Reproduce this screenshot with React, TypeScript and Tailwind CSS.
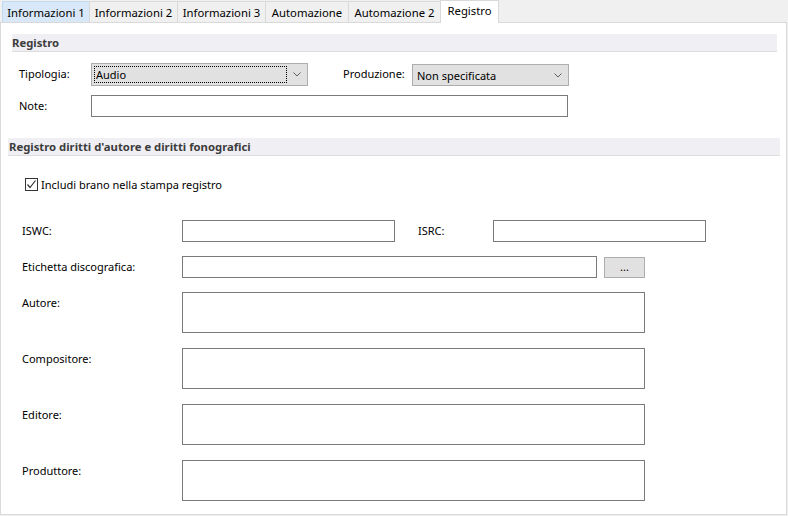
import React from "react";

const tabs = [
  { label: "Informazioni 1", w: "w-[88px]", hover: true },
  { label: "Informazioni 2", w: "w-[89px]" },
  { label: "Informazioni 3", w: "w-[89px]" },
  { label: "Automazione", w: "w-[84px]" },
  { label: "Automazione 2", w: "w-[93px]" },
];

function Chevron() {
  return (
    <svg width="8" height="5" viewBox="0 0 8 5" className="shrink-0">
      <path d="M0.5 0.5 L4 4 L7.5 0.5" fill="none" stroke="#606060" strokeWidth="1" />
    </svg>
  );
}

function Field({ label, children, top }: { label: string; children: React.ReactNode; top: string }) {
  return (
    <div className={`flex items-start ${top}`}>
      <div className="w-[181px] pl-[21px] h-[22px] flex items-center text-[11px]">{label}</div>
      {children}
    </div>
  );
}

export default function App() {
  return (
    <div
      className="w-[788px] h-[516px] bg-[#f0f0f0] text-[11.3px] text-black overflow-hidden"
      style={{ fontFamily: '"Noto Sans", "Open Sans", sans-serif' }}
    >
      {/* tab bar */}
      <div className="h-[22px] flex items-end pl-[2px] relative z-10">
        {tabs.map((t, i) => (
          <div
            key={t.label}
            className={`${t.w} h-[21px] ${i > 0 ? "-ml-px" : ""} border border-b-0 ${
              t.hover ? "bg-[#d8e8f8] border-[#c3d9ef]" : "bg-[#f0f0f0] border-[#d9d9d9]"
            } flex items-center justify-center pt-[1px] leading-none`}
          >
            {t.label}
          </div>
        ))}
        <div className="-ml-px w-[59px] h-[23px] -mb-px bg-white border border-b-0 border-[#d9d9d9] flex items-start justify-center pt-[4px] leading-none">
          Registro
        </div>
      </div>

      {/* panel */}
      <div className="w-[787px] h-[493px] bg-white border border-[#d9d9d9] flex flex-col">
        {/* section 1 */}
        <div className="ml-[11px] mt-[11px] w-[765px] h-[18px] bg-[#f0f0f4] border-b border-[#dcdcdc] flex items-center font-bold text-[#3c3c3c] leading-none">
          Registro
        </div>

        <div className="flex items-start mt-[11px] text-[11px]">
          <div className="w-[90px] pl-[18px] h-[23px] flex items-center">Tipologia:</div>
          <div className="w-[217px] h-[23px] bg-[#e1e1e1] border border-[#adadad] flex items-center pl-[2px] pr-[6px]">
            <div className="flex-1 h-[17px] border border-dotted border-black flex items-center pl-[1px] leading-none">
              Audio
            </div>
            <div className="w-[14px] flex justify-end">
              <Chevron />
            </div>
          </div>
          <div className="w-[104px] pl-[35px] h-[23px] flex items-center">Produzione:</div>
          <div className="w-[157px] h-[22px] mt-[1px] bg-[#e1e1e1] border border-[#adadad] flex items-center pl-[4px] pr-[6px] leading-none">
            <div className="flex-1">Non specificata</div>
            <Chevron />
          </div>
        </div>

        <div className="flex items-start mt-[9px] text-[11px]">
          <div className="w-[90px] pl-[18px] h-[22px] flex items-center">Note:</div>
          <div className="w-[477px] h-[22px] border border-[#7a7a7a] bg-white" />
        </div>

        {/* section 2 */}
        <div className="ml-[7px] mt-[21px] w-[772px] h-[18px] bg-[#f0f0f4] border-b border-[#dcdcdc] flex items-center pl-[1px] font-bold text-[#3c3c3c] leading-none">
          Registro diritti d'autore e diritti fonografici
        </div>

        <div className="flex items-center mt-[21px] ml-[24px] h-[14px]">
          <div className="w-[13px] h-[13px] border border-[#333333] bg-white flex items-center justify-center">
            <svg width="11" height="11" viewBox="0 0 11 11">
              <path d="M1.5 5.5 L4 8.5 L9.5 1.5" fill="none" stroke="#333333" strokeWidth="1.2" />
            </svg>
          </div>
          <div className="ml-[3px] leading-none text-[11px]">Includi brano nella stampa registro</div>
        </div>

        <Field label="ISWC:" top="mt-[29px]">
          <div className="w-[213px] h-[22px] border border-[#7a7a7a]" />
          <div className="w-[98px] pl-[23px] h-[22px] flex items-center text-[11px]">ISRC:</div>
          <div className="w-[213px] h-[22px] border border-[#7a7a7a]" />
        </Field>

        <Field label="Etichetta discografica:" top="mt-[14px]">
          <div className="w-[415px] h-[22px] border border-[#7a7a7a]" />
          <div className="ml-[7px] mt-[1px] w-[41px] h-[21px] bg-[#e1e1e1] border border-[#adadad] flex items-center justify-center leading-none pb-[2px] text-[11px]">
            ...
          </div>
        </Field>

        <Field label="Autore:" top="mt-[14px]">
          <div className="w-[463px] h-[41px] border border-[#7a7a7a]" />
        </Field>
        <Field label="Compositore:" top="mt-[15px]">
          <div className="w-[463px] h-[41px] border border-[#7a7a7a]" />
        </Field>
        <Field label="Editore:" top="mt-[15px]">
          <div className="w-[463px] h-[41px] border border-[#7a7a7a]" />
        </Field>
        <Field label="Produttore:" top="mt-[15px]">
          <div className="w-[463px] h-[41px] border border-[#7a7a7a]" />
        </Field>
      </div>
    </div>
  );
}
